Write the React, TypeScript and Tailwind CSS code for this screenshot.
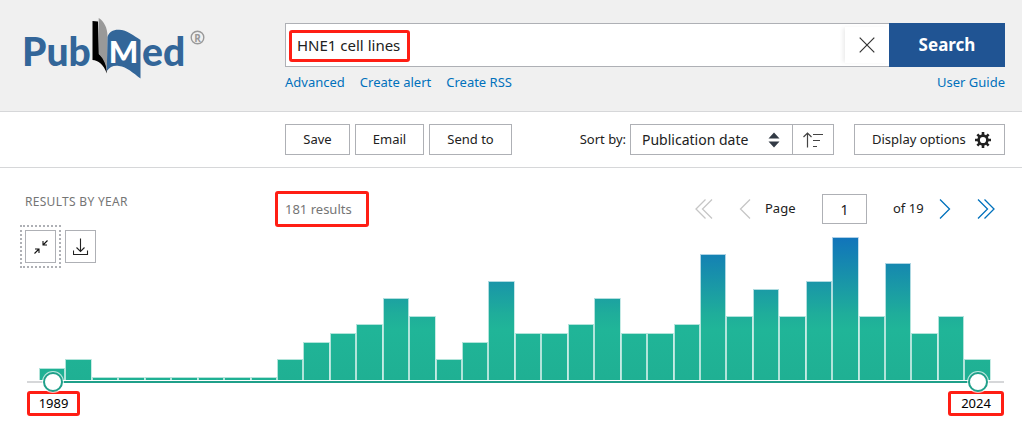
import React, { useState } from "react";

const FIRST_YEAR = 1989;
const LAST_YEAR = 2024;

const counts = [
  1, 2, 0, 0, 0, 0, 0, 0, 0, 2, 4, 5, 6, 9, 7, 2, 4, 11, 5, 5, 6, 9, 5, 5, 6,
  14, 7, 10, 7, 11, 16, 7, 13, 5, 7, 2,
];

const barHeight = (count: number) => Math.round(3 + count * 8.75);

function Logo() {
  return (
    <svg width="194" height="64" viewBox="-10 0 194 64" role="img" aria-label="PubMed">
      <g fontFamily="Lato, sans-serif" fontWeight="900" fill="#336699">
        <text x="-3" y="50" fontSize="39">Pub</text>
        <text x="117" y="50" fontSize="39">ed</text>
      </g>
      <path d="M67.500 5 L73 5.500 L74 38 C79 41 82 48 81.800 57.500 C79 49 73 44 67.500 44 Z" fill="#000" />
      <path d="M73.700 2 C79 5 82.500 12 82.500 20 L81.800 54 C80.500 46 77 41 73.700 38 Z" fill="#999" />
      <path
        d="M82.500 21 C84 16 88 13.600 94 13.800 C102 14 109 20 115.500 24 L115.500 62.500 C108 57 102 51 94 50 C88 49.300 85 51 81.800 55 Z"
        fill="#336699"
      />
      <text x="98.500" y="47" textAnchor="middle" fontSize="31" fontFamily="Lato, sans-serif" fontWeight="900" fill="#fff">M</text>
      <circle cx="172.500" cy="21.500" r="6.300" fill="none" stroke="#999" strokeWidth="1.400" />
      <text x="169.200" y="25.500" fontSize="10" fontFamily="Open Sans, sans-serif" fontWeight="700" fill="#999">R</text>
    </svg>
  );
}

function Chevron({ double = false, left = false }: { double?: boolean; left?: boolean }) {
  return (
    <svg
      width={double ? 18 : 12}
      height="20"
      viewBox={double ? "0 0 18 20" : "0 0 12 20"}
      fill="none"
      stroke="currentColor"
      strokeWidth="1.3"
      className={left ? "rotate-180" : ""}
      aria-hidden="true"
    >
      <path d="M1 0.500 L10.500 10 L1 19.500" />
      {double && <path d="M7.500 0.500 L17 10 L7.500 19.500" />}
    </svg>
  );
}

function GearIcon() {
  return (
    <svg width="16" height="16" viewBox="0 0 16 16" fill="none" stroke="#212121" aria-hidden="true">
      <circle cx="8" cy="8" r="4.400" strokeWidth="2.600" />
      <path
        strokeWidth="2.600"
        d="M8 0V3.500M8 12.500V16M0 8H3.500M12.500 8H16M2.350 2.350L4.800 4.800M11.200 11.200L13.650 13.650M2.350 13.650L4.800 11.200M11.200 4.800L13.650 2.350"
      />
    </svg>
  );
}

const outlined = "h-[31px] border border-[#aeb0b5] bg-white text-[13px] text-[#212121]";
const link = "text-[13px] leading-5 text-[#0071bc]";
const thumb =
  "pointer-events-none absolute inset-x-4 top-0 h-5 appearance-none bg-transparent [&::-webkit-slider-thumb]:pointer-events-auto [&::-webkit-slider-thumb]:h-5 [&::-webkit-slider-thumb]:w-5 [&::-webkit-slider-thumb]:appearance-none [&::-webkit-slider-thumb]:rounded-full [&::-webkit-slider-thumb]:border-2 [&::-webkit-slider-thumb]:border-solid [&::-webkit-slider-thumb]:border-[#20a08a] [&::-webkit-slider-thumb]:bg-white [&::-webkit-slider-thumb]:shadow-[0_0_0_1px_rgba(255,255,255,0.7)]";
const marked = "rounded-[3px] border-[3px] border-[#ff1e14]";

export default function App() {
  const [query, setQuery] = useState("HNE1 cell lines");
  const [page, setPage] = useState("1");
  const [from, setFrom] = useState(FIRST_YEAR);
  const [to, setTo] = useState(LAST_YEAR);

  return (
    <div className="bg-white font-['Noto_Sans','Open_Sans',sans-serif] text-[#212121]">
      <header className="flex h-28 border-b border-[#d6d7d9] bg-[#f0f0f0] pr-[17px] pl-[15px]">
        <div className="w-[270px] shrink-0 pt-4">
          <a href="#home" className="inline-block">
            <Logo />
          </a>
        </div>
        <form className="flex-1 pt-[23px]" onSubmit={(e) => e.preventDefault()}>
          <div className="flex h-11">
            <div className="relative flex flex-1 border border-r-0 border-[#aeb0b5] bg-white">
              <input
                aria-label="Search term"
                value={query}
                onChange={(e) => setQuery(e.target.value)}
                className="min-w-0 flex-1 bg-transparent pl-[11px] text-[15px] outline-none"
              />
              <div className={`pointer-events-none absolute top-[6px] left-[3px] h-8 w-[121px] ${marked}`} />
              <button
                type="button"
                aria-label="Clear search input"
                onClick={() => setQuery("")}
                className="my-[3px] flex w-11 items-center justify-center bg-white shadow-[-3px_0_4px_-1px_rgba(0,0,0,0.08)]"
              >
                <svg width="16" height="16" viewBox="0 0 16 16" stroke="#333" strokeWidth="1.2" aria-hidden="true">
                  <path d="M0.700 0.700L15.300 15.300M15.300 0.700L0.700 15.300" />
                </svg>
              </button>
            </div>
            <button type="submit" className="w-[116px] bg-[#205493] text-[17px] font-bold text-white">
              Search
            </button>
          </div>
          <nav className="mt-[5px] flex gap-[15px]">
            <a href="#advanced" className={link}>Advanced</a>
            <a href="#alert" className={link}>Create alert</a>
            <a href="#rss" className={link}>Create RSS</a>
            <a href="#guide" className={`ml-auto ${link}`}>User Guide</a>
          </nav>
        </form>
      </header>

      <div className="flex h-14 items-center border-b border-[#d6d7d9] pr-[17px] pl-[285px]">
        <div className="flex gap-[5px]">
          <button className={`w-[65px] ${outlined}`}>Save</button>
          <button className={`w-[69px] ${outlined}`}>Email</button>
          <button className={`w-[83px] ${outlined}`}>Send to</button>
        </div>
        <label htmlFor="sort" className="ml-auto pr-1 text-[13px]">Sort by:</label>
        <div className="relative">
          <select
            id="sort"
            defaultValue="date"
            className="h-[31px] w-[162px] appearance-none border border-r-0 border-[#aeb0b5] bg-white pl-[11px] text-sm"
          >
            <option value="date">Publication date</option>
            <option value="match">Best match</option>
          </select>
          <svg width="12" height="16" viewBox="0 0 12 16" fill="#323a45" className="pointer-events-none absolute top-2 right-3" aria-hidden="true">
            <path d="M6 0.500L11.500 6.500H0.500ZM6 15.500L0.500 9.500H11.500Z" />
          </svg>
        </div>
        <button aria-label="Reverse sort order" className={`flex w-[42px] items-center justify-center ${outlined}`}>
          <svg width="20" height="16" viewBox="0 0 20 16" fill="none" stroke="#444" strokeWidth="1.2" aria-hidden="true">
            <path d="M4.500 15.500V1M0.500 5L4.500 1L8.500 5M10 2.500H20M10 8.500H17M10 14.500H14" />
          </svg>
        </button>
        <button className={`ml-5 flex w-[151px] items-center justify-between pr-[13px] pl-[17px] ${outlined}`}>
          Display options
          <GearIcon />
        </button>
      </div>

      <main className="pt-[23px] pb-2">
        <div className="flex h-[77px] pr-[27px] pl-[25px]">
          <section className="w-[250px] shrink-0">
            <h2 className="text-xs leading-[22px] tracking-wide text-[#757575]">RESULTS BY YEAR</h2>
            <div className="relative z-10 mt-[17px] flex gap-[9px]">
              <button
                aria-label="Collapse timeline"
                className="flex h-[33px] w-[31px] items-center justify-center border border-[#aeb0b5] outline-2 outline-offset-[3px] outline-[#aeb0b5] outline-dotted"
              >
                <svg width="14" height="14" viewBox="0 0 14 14" fill="none" stroke="#111" strokeWidth="1.1" aria-hidden="true">
                  <path d="M13.500 0.500L9 5M9 1V5H13M0.500 13.500L5 9M1 9H5V13" />
                </svg>
              </button>
              <button
                aria-label="Download timeline data"
                className="flex h-[33px] w-[31px] items-center justify-center border border-[#aeb0b5]"
              >
                <svg width="16" height="18" viewBox="0 0 16 18" fill="none" stroke="#222" strokeWidth="1.1" aria-hidden="true">
                  <path d="M7.500 0.500V13.500M3.500 9.500L7.500 13.500L11.500 9.500M0.500 12.500V16.500H14.500V12.500" />
                </svg>
              </button>
            </div>
          </section>
          <div className="flex flex-1 items-start">
            <div className={`flex h-9 w-[94px] items-center pt-0.5 pl-[7px] text-[13px] text-[#757575] ${marked}`}>
              181 results
            </div>
            <nav aria-label="Pagination" className="ml-auto flex h-9 items-center text-[13px]">
              <button aria-label="First page" className="text-[#c6c6c6]"><Chevron double left /></button>
              <button aria-label="Previous page" className="ml-[26px] text-[#c6c6c6]"><Chevron left /></button>
              <label htmlFor="page" className="ml-[14px] w-[57px]">Page</label>
              <input
                id="page"
                value={page}
                onChange={(e) => setPage(e.target.value)}
                className="h-[30px] w-[45px] border border-[#aeb0b5] text-center text-sm"
              />
              <span className="ml-[26px] w-[33px] whitespace-nowrap">of 19</span>
              <button aria-label="Next page" className="ml-[13px] text-[#0071bc]"><Chevron /></button>
              <button aria-label="Last page" className="ml-[26px] text-[#0071bc]"><Chevron double /></button>
            </nav>
          </div>
        </div>

        <section aria-label="Results timeline" className="-mt-[31px] pr-[18px] pl-[27px]">
          <div className="flex h-[143px] items-end pr-[13px] pl-3">
            {counts.map((count, i) => (
              <div
                key={FIRST_YEAR + i}
                title={`${FIRST_YEAR + i}: ${count}`}
                className="flex-1 border border-b-0 border-white/65 bg-[linear-gradient(to_top,#1fb093_0px,#20b598_50px,#1fae9a_65px,#1174bb_143px)] bg-[length:100%_143px] bg-bottom bg-no-repeat bg-origin-border"
                style={{ height: barHeight(count) }}
              />
            ))}
          </div>
          <div className="relative -mt-2 h-5">
            <div className="flex h-full items-center">
              <div className="h-0.5 w-full bg-[#d6d7d9] px-[26px]">
                <div className="h-0.5 bg-[#20a08a]" />
              </div>
            </div>
            <input
              type="range"
              aria-label="Start year"
              min={FIRST_YEAR}
              max={LAST_YEAR}
              value={from}
              onChange={(e) => setFrom(Math.min(Number(e.target.value), to))}
              className={thumb}
            />
            <input
              type="range"
              aria-label="End year"
              min={FIRST_YEAR}
              max={LAST_YEAR}
              value={to}
              onChange={(e) => setTo(Math.max(Number(e.target.value), from))}
              className={thumb}
            />
          </div>
          <div className="-mt-px flex justify-between text-[13px] leading-none text-black">
            <output className={`flex h-[25px] w-[53px] items-center justify-center ${marked}`}>{from}</output>
            <output className={`flex h-[25px] w-14 items-center justify-center ${marked}`}>{to}</output>
          </div>
        </section>
      </main>
    </div>
  );
}
